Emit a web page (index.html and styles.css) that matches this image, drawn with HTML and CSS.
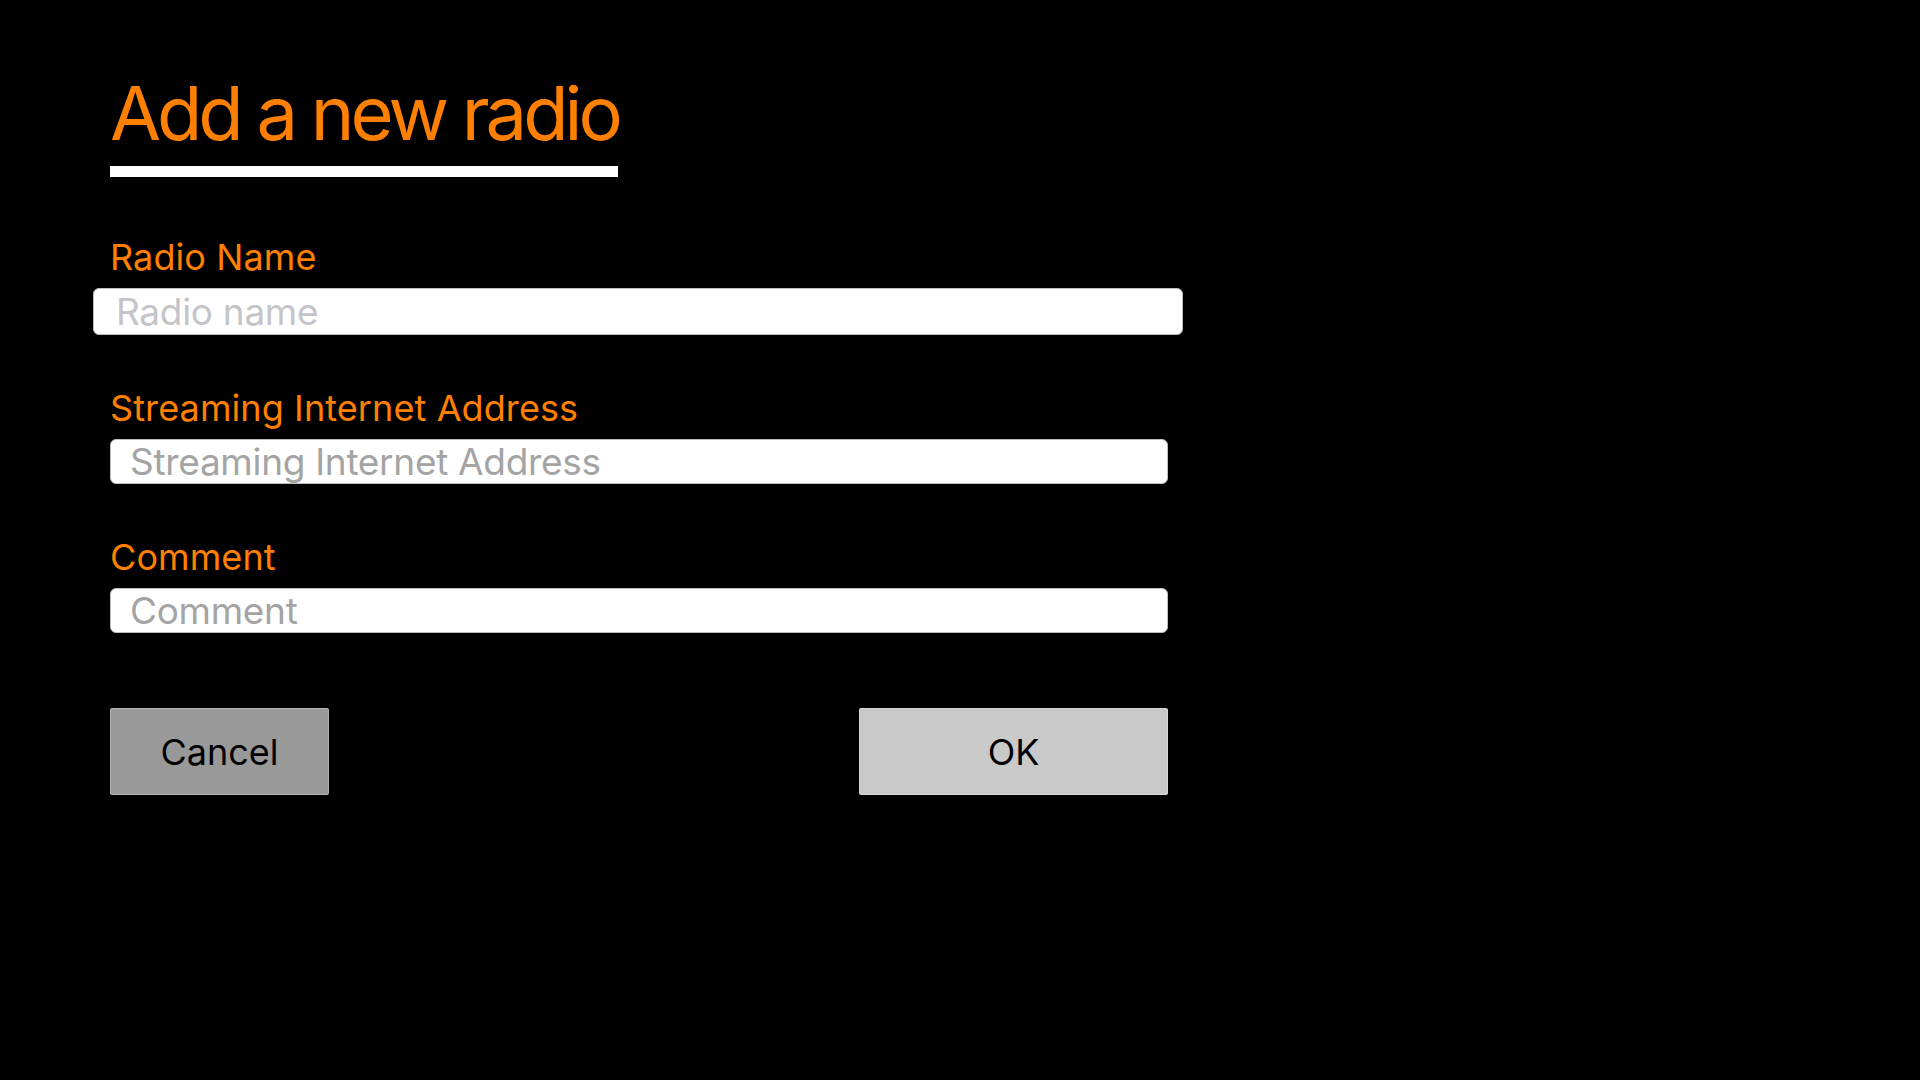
FILE: index.html
```html
<!DOCTYPE html>
<html lang="en">
<head>
<meta charset="utf-8">
<title>Add a new radio</title>
<link rel="stylesheet" href="styles.css">
</head>
<body>
<main class="page">
  <header class="title-block">
    <h1 class="title">Add a new radio</h1>
    <div class="title-bar"></div>
  </header>
  <form class="form">
    <div class="field">
      <label class="label" for="name">Radio Name</label>
      <input class="input input-focused" id="name" type="text" placeholder="Radio name">
    </div>
    <div class="field">
      <label class="label" for="url">Streaming Internet Address</label>
      <input class="input" id="url" type="text" placeholder="Streaming Internet Address">
    </div>
    <div class="field">
      <label class="label" for="comment">Comment</label>
      <input class="input" id="comment" type="text" placeholder="Comment">
    </div>
    <div class="actions">
      <button type="button" class="btn btn-cancel">Cancel</button>
      <button type="button" class="btn btn-ok">OK</button>
    </div>
  </form>
</main>
</body>
</html>
```

FILE: styles.css
```css
html, body {
  margin: 0;
  padding: 0;
  background: #000;
  height: 100%;
}

body {
  font-family: Inter, "Liberation Sans", sans-serif;
}

.page {
  padding: 77px 0 0 110px;
  width: 1058px;
}

.title-block {
  display: flex;
  flex-direction: column;
  align-items: flex-start;
}

.title {
  margin: 0;
  font-size: 74px;
  line-height: 73px;
  font-weight: 400;
  color: #ff8000;
  letter-spacing: -4px;
}

.title-bar {
  margin-top: 16px;
  width: 508px;
  height: 11px;
  background: #fff;
}

.form {
  display: flex;
  flex-direction: column;
  margin-top: 60px;
}

.field {
  display: flex;
  flex-direction: column;
  margin-bottom: 53px;
}

.label {
  font-size: 36px;
  line-height: 40px;
  color: #ff8000;
  letter-spacing: 0.1px;
  margin-bottom: 11px;
}

.input {
  box-sizing: border-box;
  height: 45px;
  width: 100%;
  margin: 0;
  padding: 0 0 0 19px;
  border: 1px solid #bdbdbd;
  border-radius: 6px;
  background: #fff;
  font-family: Inter, "Liberation Sans", sans-serif;
  font-size: 37px;
  color: #333;
  outline: none;
  letter-spacing: -0.3px;
}

.input::placeholder {
  color: #a4a4a4;
}

.input-focused {
  height: 47px;
  width: auto;
  margin: 0 -15px 0 -17px;
  padding-left: 22px;
}

.input-focused::placeholder {
  color: #c4c4ca;
}

.actions {
  display: flex;
  justify-content: space-between;
  margin-top: 22px;
}

.btn {
  height: 87px;
  border: 1px solid rgba(255, 255, 255, 0.25);
  border-radius: 2px;
  font-family: Inter, "Liberation Sans", sans-serif;
  font-size: 36px;
  color: #000;
  padding: 0;
  cursor: pointer;
}

.btn-cancel {
  width: 219px;
  background: #999;
}

.btn-ok {
  width: 309px;
  background: #c9c9c9;
}
```
